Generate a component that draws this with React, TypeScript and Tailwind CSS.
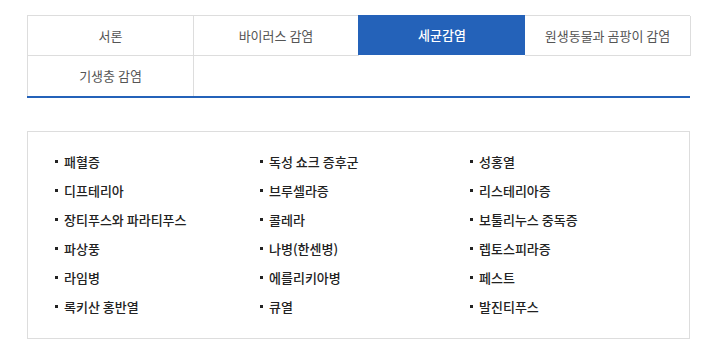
const tabs = ['서론', '바이러스 감염', '세균감염', '원생동물과 곰팡이 감염', '기생충 감염'];

const items = [
  '패혈증', '독성 쇼크 증후군', '성홍열',
  '디프테리아', '브루셀라증', '리스테리아증',
  '장티푸스와 파라티푸스', '콜레라', '보툴리누스 중독증',
  '파상풍', '나병(한센병)', '렙토스피라증',
  '라임병', '에를리키아병', '페스트',
  '록키산 홍반열', '큐열', '발진티푸스',
];

export default function App() {
  return (
    <div
      className="w-[707px] h-[355px] bg-white pt-[15px] pl-[27px]"
      style={{ fontFamily: '"Noto Sans CJK KR", "Noto Sans", sans-serif' }}
    >
      <div className="w-[663px]">
        <div className="grid grid-cols-[166px_165px_166px_166px] border-t border-l border-[#dddddd]">
          {tabs.slice(0, 4).map((t, i) =>
            i === 2 ? (
              <div
                key={t}
                className="h-[40px] -mt-px -ml-px flex items-center justify-center bg-[#2462b9] text-white text-[13px] font-medium"
              >
                <span className="pl-px">{t}</span>
              </div>
            ) : (
              <div
                key={t}
                className="h-[40px] flex items-center justify-center border-r border-b border-[#dddddd] text-[13px] text-[#555555]"
              >
                {t}
              </div>
            )
          )}
          <div className="h-[40px] flex items-center justify-center border-r border-[#dddddd] text-[13px] text-[#555555]">
            {tabs[4]}
          </div>
        </div>
        <div className="h-[2px] bg-[#2462b9]" />
      </div>

      <div className="mt-[33px] w-[663px] h-[208px] border border-[#dddddd] pt-[15px] pl-[27px]">
        <ul className="grid grid-cols-[205px_210px_200px]">
          {items.map((it) => (
            <li key={it} className="h-[29px] flex items-center text-[13px] font-medium text-[#222222]">
              <span className="w-[3px] h-[3px] bg-[#222222] mr-[6px]" />
              {it}
            </li>
          ))}
        </ul>
      </div>
    </div>
  );
}
